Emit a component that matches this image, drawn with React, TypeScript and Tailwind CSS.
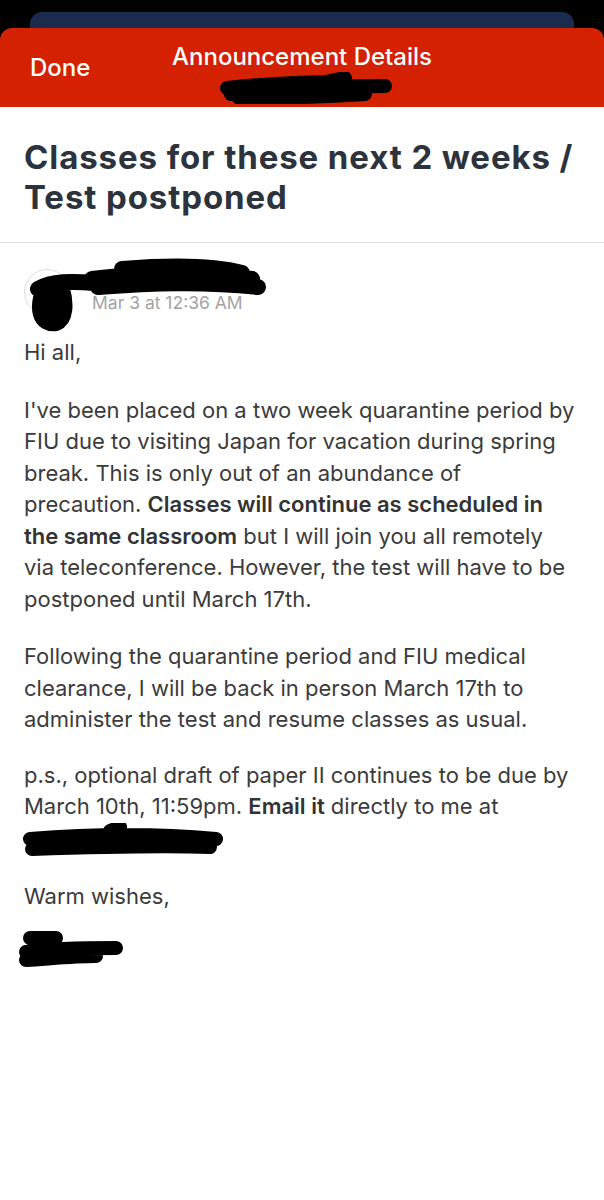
import React from 'react'

function Scribble({ className, d, width, height, stroke = 14 }: { className?: string; d: string; width: number; height: number; stroke?: number }) {
  return (
    <svg className={className} width={width} height={height} viewBox={`0 0 ${width} ${height}`} fill="none">
      <path d={d} stroke="#000" strokeWidth={stroke} strokeLinecap="round" strokeLinejoin="round" />
    </svg>
  )
}

const body = 'text-[22px] leading-[31.5px] text-[#3b3b3b]'

export default function App() {
  return (
    <div className="w-[604px] h-[1200px] bg-white overflow-hidden" style={{ fontFamily: 'Inter, "Liberation Sans", sans-serif' }}>
      <div className="bg-black pt-[12px]">
        <div className="mx-[30px] h-[16px] rounded-t-[12px] bg-[#1b2b4d]" />
        <header className="relative h-[79px] rounded-t-[12px] bg-[#d42102] text-white">
          <div className="absolute left-[30px] top-[22px] text-[24px] font-medium">Done</div>
          <div className="absolute left-0 right-0 top-[11px] text-center text-[24px] font-medium">Announcement Details</div>
          <Scribble
            className="absolute left-[215px] top-[44px]"
            width={180}
            height={32}
            d="M12 16 C50 12 90 10 130 10 M16 22 C60 18 120 14 170 14 M24 26 C70 26 120 24 150 22 M110 10 L130 6"
          />
        </header>
      </div>

      <div className="px-[24px] pt-[30px] pb-[25px] border-b border-[#e0e0e0]">
        <h1 className="text-[33px] leading-[40px] font-bold text-[#2c333d] tracking-[0.9px]">
          Classes for these next 2 weeks /<br />Test postponed
        </h1>
      </div>

      <div className="relative flex items-end h-[84px] px-[24px] pb-[12px]">
        <div className="w-[46px] h-[46px] rounded-full border border-[#ddd]" />
        <span className="ml-[22px] text-[17.5px] text-[#a3a3a3] leading-[20px] mb-[2px]">Mar 3 at 12:36 AM</span>
        <Scribble
          className="absolute left-[22px] top-[10px]"
          width={250}
          height={80}
          stroke={16}
          d="M22 36 C14 56 18 72 34 70 C44 66 44 50 40 36 M28 40 L30 60 M16 36 C30 28 50 28 72 30 M70 26 C120 20 170 18 230 26 M76 34 C130 30 180 28 236 34 M100 16 C150 12 190 12 220 20 M20 58 L30 66"
        />
      </div>

      <div className={`px-[24px] pt-[10px] ${body}`}>
        <p>Hi all,</p>
        <p className="mt-[26px]">
          I've been placed on a two week quarantine period by<br />
          FIU due to visiting Japan for vacation during spring<br />
          break. This is only out of an abundance of<br />
          precaution. <b className="font-semibold text-[#333]">Classes will continue as scheduled in<br />the same classroom</b> but I will join you all remotely<br />
          via teleconference. However, the test will have to be<br />
          postponed until March 17th.
        </p>
        <p className="mt-[26px]">
          Following the quarantine period and FIU medical<br />
          clearance, I will be back in person March 17th to<br />
          administer the test and resume classes as usual.
        </p>
        <p className="mt-[24px]">
          p.s., optional draft of paper II continues to be due by<br />
          March 10th, 11:59pm. <b className="font-semibold text-[#333]">Email it</b> directly to me at
        </p>
        <div className="h-[34px]">
          <Scribble
            className="-ml-[4px]"
            width={210}
            height={36}
            d="M10 16 C60 12 130 10 196 16 M12 26 C70 24 140 22 190 24 M90 8 L100 4"
          />
        </div>
        <p className="mt-[24px]">Warm wishes,</p>
        <div className="mt-[14px]">
          <Scribble
            className="-ml-[8px]"
            width={110}
            height={44}
            d="M14 12 L40 12 M10 26 C40 22 70 22 100 22 M10 34 C40 32 60 30 80 30"
          />
        </div>
      </div>
    </div>
  )
}
